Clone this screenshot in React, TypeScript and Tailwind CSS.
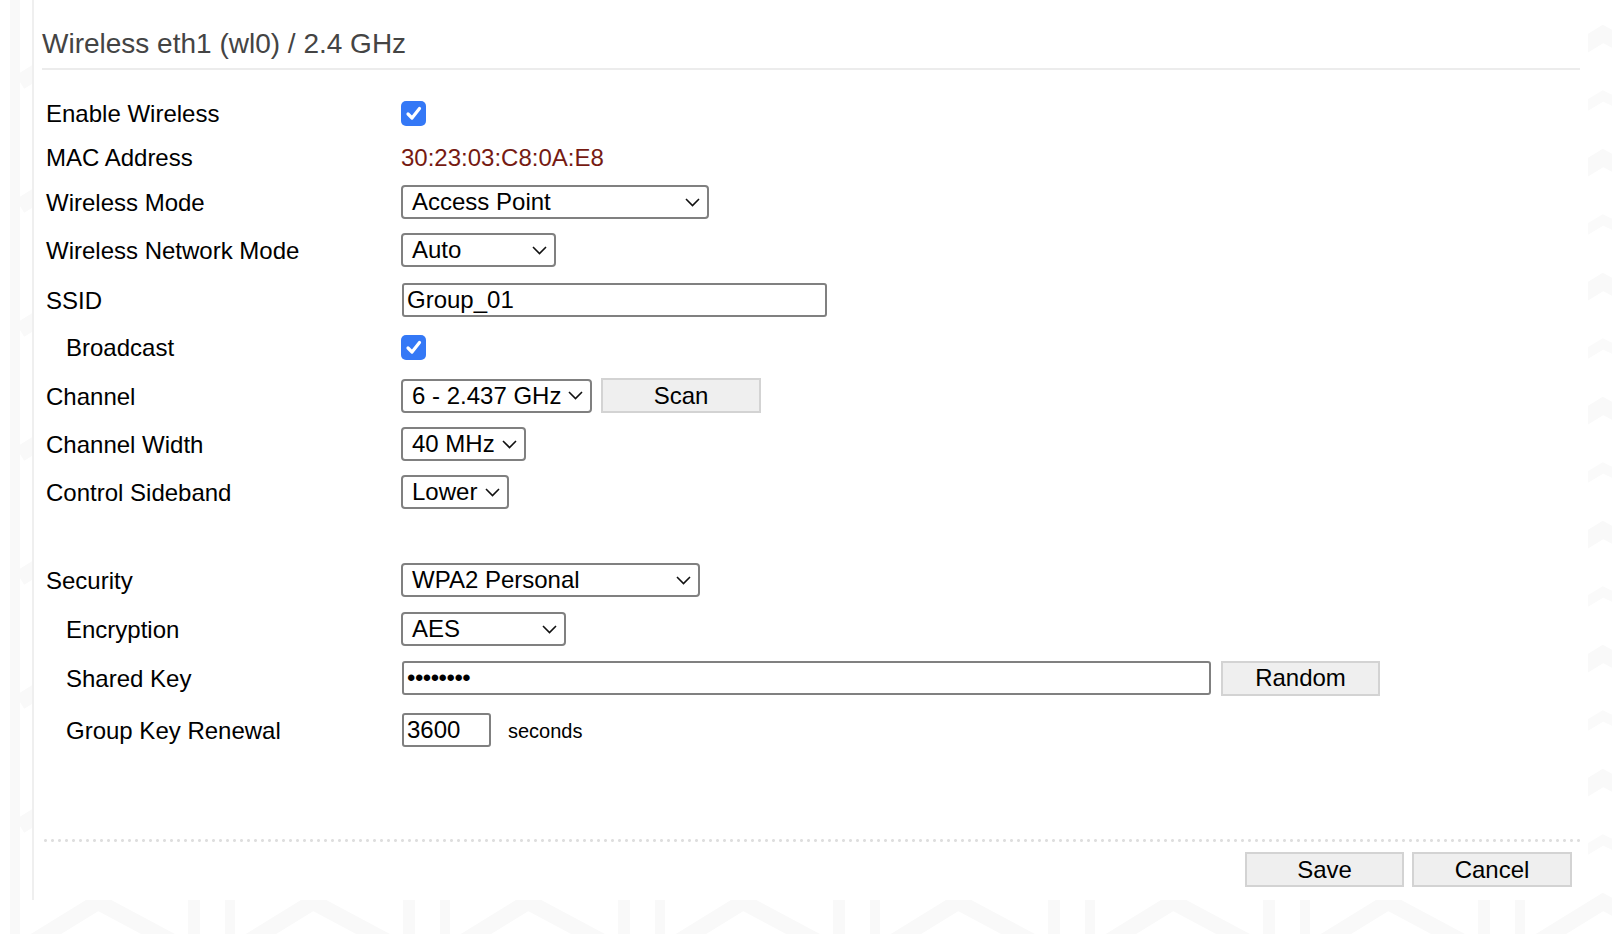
import { ReactNode } from 'react'

const font = "font-['Liberation_Sans',Arial,Helvetica,sans-serif]"

const Checkbox = () => (
	<div className="w-[25px] h-[25px] rounded-[5px] bg-[#3478f6] flex items-center justify-center">
		<svg width="17" height="17" viewBox="0 0 17 17" fill="none">
			<path d="M3 9 L7 13 L14.5 3.5" stroke="white" strokeWidth="3.2" strokeLinecap="round" strokeLinejoin="round" />
		</svg>
	</div>
)

const Select = ({ value, className }: { value: string; className: string }) => (
	<div
		className={`h-[34px] border-2 border-[#808080] rounded-[4px] bg-white flex items-center justify-between pl-[9px] pr-[7px] text-[24px] text-black ${className}`}
	>
		<span className="whitespace-nowrap">{value}</span>
		<svg width="15" height="9" viewBox="0 0 15 9" fill="none" className="shrink-0 ml-1">
			<path d="M1 1 L7.5 7.5 L14 1" stroke="#111" strokeWidth="1.6" />
		</svg>
	</div>
)

const TextBox = ({ value, className }: { value: string; className: string }) => (
	<div
		className={`h-[34px] border-2 border-[#808080] rounded-[3px] bg-white flex items-center pl-[3px] text-[24px] text-black ml-[1px] ${className}`}
	>
		{value}
	</div>
)

const Btn = ({ children, className }: { children: ReactNode; className: string }) => (
	<button
		className={`h-[35px] bg-[#efefef] border-2 border-[#d3d3d3] text-[24px] text-black flex items-center justify-center ${className}`}
	>
		{children}
	</button>
)

const Row = ({
	label,
	indent,
	height,
	children,
}: {
	label: string
	indent?: boolean
	height: string
	children: ReactNode
}) => (
	<div className={`grid grid-cols-[359px_1fr] items-center ${height}`}>
		<div className={`text-[24px] text-black pt-[2px] ${indent ? 'pl-6' : 'pl-1'}`}>{label}</div>
		<div className="flex items-center">{children}</div>
	</div>
)

const Pattern = () => (
	<svg className="absolute inset-0" width="1612" height="934">
		<defs>
			<pattern id="bgp" width="215" height="124" patternUnits="userSpaceOnUse" x="-2" y="20">
				<rect x="12" y="0" width="10" height="124" fill="#f9f9f9" />
				<rect x="190" y="0" width="12" height="124" fill="#f9f9f9" />
				<polyline points="22,62 100,14 190,62" fill="none" stroke="#f9f9f9" strokeWidth="16" />
				<polyline points="60,100 100,76 150,100" fill="none" stroke="#fafafa" strokeWidth="10" />
			</pattern>
		</defs>
		<rect width="1612" height="934" fill="#ffffff" />
		<rect width="1612" height="934" fill="url(#bgp)" />
	</svg>
)

export default function App() {
	return (
		<div className={`relative w-[1612px] h-[934px] overflow-hidden ${font}`}>
			<Pattern />

			<div className="relative ml-[32px] w-[1556px] h-[900px] bg-white border-l-2 border-[#efefef] pl-2 pr-2 flex flex-col">
				<div className="pt-7 pb-2 border-b-2 border-[#ececec] text-[28px] leading-[32px] text-[#444]">
					Wireless eth1 (wl0) / 2.4 GHz
				</div>

				<div className="mt-5 flex flex-col">
					<Row label="Enable Wireless" height="h-[46px]">
						<Checkbox />
					</Row>
					<Row label="MAC Address" height="h-[42px]">
						<span className="text-[24px] text-[#761a12] pt-[2px]">30:23:03:C8:0A:E8</span>
					</Row>
					<Row label="Wireless Mode" height="h-[48px]">
						<Select value="Access Point" className="w-[308px]" />
					</Row>
					<Row label="Wireless Network Mode" height="h-[48px]">
						<Select value="Auto" className="w-[155px]" />
					</Row>
					<Row label="SSID" height="h-[52px]">
						<TextBox value="Group_01" className="w-[425px]" />
					</Row>
					<Row label="Broadcast" indent height="h-[42px]">
						<Checkbox />
					</Row>
					<Row label="Channel" height="h-[55px]">
						<Select value="6 - 2.437 GHz" className="w-[191px]" />
						<Btn className="w-[160px] ml-[9px]">Scan</Btn>
					</Row>
					<Row label="Channel Width" height="h-[42px]">
						<Select value="40 MHz" className="w-[125px]" />
					</Row>
					<Row label="Control Sideband" height="h-[54px]">
						<Select value="Lower" className="w-[108px]" />
					</Row>

					<div className="h-[37px]" />

					<Row label="Security" height="h-[48px]">
						<Select value="WPA2 Personal" className="w-[299px]" />
					</Row>
					<Row label="Encryption" indent height="h-[50px]">
						<Select value="AES" className="w-[165px]" />
					</Row>
					<Row label="Shared Key" indent height="h-[48px]">
						<TextBox value="••••••••" className="w-[809px] text-[17px] tracking-[-0.5px]" />
						<Btn className="w-[159px] ml-[10px]">Random</Btn>
					</Row>
					<Row label="Group Key Renewal" indent height="h-[56px]">
						<TextBox value="3600" className="w-[89px]" />
						<span className="ml-[17px] text-[20px] text-black pt-[2px]">seconds</span>
					</Row>
				</div>

				<div className="mt-[81px] h-[3px] bg-[radial-gradient(circle,#dedede_1.2px,transparent_1.7px)] bg-size-[7px_3px]" />

				<div className="mt-[10px] flex justify-end gap-2 pr-2">
					<Btn className="w-[159px]">Save</Btn>
					<Btn className="w-[160px]">Cancel</Btn>
				</div>
			</div>
		</div>
	)
}
